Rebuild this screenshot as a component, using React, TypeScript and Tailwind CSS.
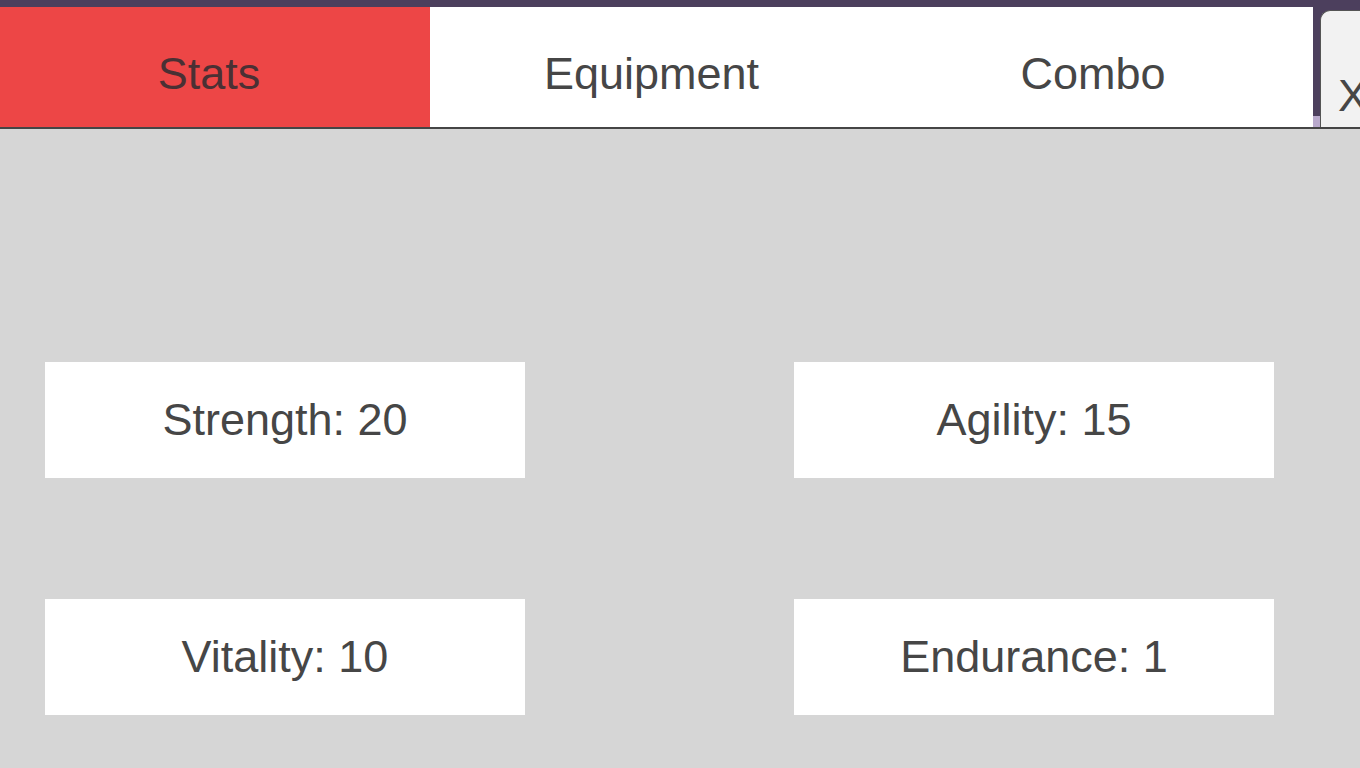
import React from "react";

const tabs = [
  { label: "Stats", width: "w-[430px] pr-[12px]", active: true },
  { label: "Equipment", width: "w-[443px]", active: false },
  { label: "Combo", width: "w-[440px]", active: false },
];

const stats = [
  ["Strength: 20", "Agility: 15"],
  ["Vitality: 10", "Endurance: 1"],
];

export default function App() {
  return (
    <div
      className="w-[1360px] h-[768px] overflow-hidden bg-[#d6d6d6]"
      style={{ fontFamily: '"Liberation Sans", Arial, sans-serif' }}
    >
      {/* Tab bar */}
      <div className="bg-[#4c3f5d] pt-[7px] flex h-[127px]">
        {tabs.map((t) => (
          <div
            key={t.label}
            className={`${t.width} shrink-0 h-[120px] flex items-center justify-center pt-[14px] text-[45px] ${
              t.active ? "bg-[#ed4646] text-[#4a3034]" : "bg-white text-[#464646]"
            }`}
          >
            {t.label}
          </div>
        ))}
        <div className="w-[7px] shrink-0 h-[120px] flex flex-col">
          <div className="flex-1" />
          <div className="h-[11px] bg-[#b9a9cc]" />
        </div>
        <div className="w-[60px] shrink-0 mt-[3px] h-[117px] bg-[#f2f2f2] border-l border-t border-[#555] rounded-tl-[10px] pl-[17px] pt-[62px] text-[45px] leading-none text-[#464646]">
          X
        </div>
      </div>
      <div className="h-[2px] bg-[#454545]" />

      {/* Stats grid */}
      <div className="flex flex-col pt-[233px] pl-[45px] gap-[121px]">
        {stats.map((row, i) => (
          <div key={i} className="flex gap-[269px]">
            {row.map((s) => (
              <div
                key={s}
                className="w-[480px] h-[116px] bg-white flex items-center justify-center text-[45px] text-[#464646]"
              >
                {s}
              </div>
            ))}
          </div>
        ))}
      </div>
    </div>
  );
}
